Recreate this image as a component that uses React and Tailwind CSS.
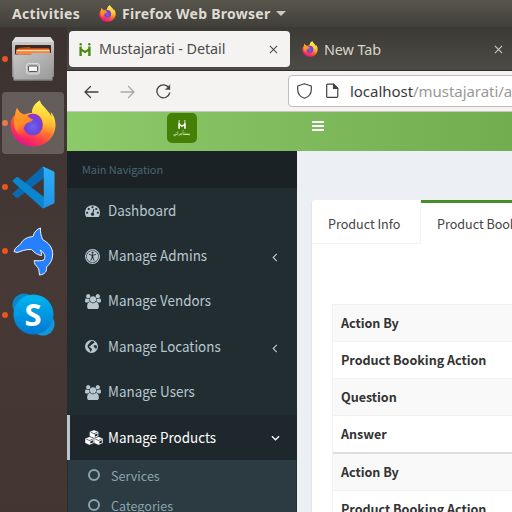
import React from "react";

const UI = "font-['Noto_Sans','Open_Sans',sans-serif]";
const PAGE = "font-['Noto_Sans_CJK_JP','Noto_Sans_CJK_SC',sans-serif]";

function Firefox({ id, className }) {
  return (
    <svg viewBox="0 0 46 47" className={className}>
      <defs>
        <linearGradient id={id + "b"} x1="0.8" y1="0.1" x2="0.3" y2="1">
          <stop offset="0.05" stopColor="#fff44f" />
          <stop offset="0.3" stopColor="#ffc02e" />
          <stop offset="0.52" stopColor="#ff722f" />
          <stop offset="0.75" stopColor="#ff3750" />
          <stop offset="1" stopColor="#e0128c" />
        </linearGradient>
        <linearGradient id={id + "y"} x1="0.5" y1="0" x2="0.5" y2="1">
          <stop offset="0" stopColor="#fff44f" />
          <stop offset="0.6" stopColor="#ffc52f" />
          <stop offset="1" stopColor="#ff6a35" stopOpacity="0.1" />
        </linearGradient>
        <linearGradient id={id + "o"} x1="0.2" y1="0" x2="0.6" y2="1">
          <stop offset="0" stopColor="#ffa52a" />
          <stop offset="0.55" stopColor="#ff8a25" />
          <stop offset="1" stopColor="#ff4048" stopOpacity="0.1" />
        </linearGradient>
        <radialGradient id={id + "p"} cx="0.5" cy="0.6" r="0.6">
          <stop offset="0" stopColor="#7160f5" />
          <stop offset="0.6" stopColor="#6b45d8" />
          <stop offset="1" stopColor="#a030c8" />
        </radialGradient>
      </defs>
      <path fill={`url(#${id}b)`} d="M7 8C5 13 5.500 14 5.500 14C1.500 18 .5 22 .6 26C1.300 38 11 46.500 23 46.500C36 46.500 45.500 37 45.500 25C45.500 18 42.500 13.500 40.500 12C41.500 15 41.500 17 41.500 17C40 13 36.500 10 34 7C31.500 4.500 30 2 29.800.4C24 4 22 9 22 13C17 13 14 15 14 15C10 13 8.500 11 7 8Z" />
      <path fill={`url(#${id}y)`} d="M29.800.4C23.500 4 22 9 22 13C29 13 33 18 33.500 23C34 32 28 35 23 36C32 39 41 34 42.500 25C43.400 20 42 17 41.500 17C40 13 36.500 10 34 7C31.500 4.500 30 2 29.800.4Z" />
      <ellipse cx="23" cy="24.500" rx="9.800" ry="10.800" fill={`url(#${id}p)`} />
      <path fill={`url(#${id}o)`} d="M7 8C8.500 12 12 14.500 16.500 14.800C18 17 20 18.500 23 19.500C22.500 22 18 22.500 16.500 23.500C14.500 25 15 27 13.300 28.500C15 34.500 19 36 24 35.500C18 40 7 37 4.500 27C3.500 22 4.500 17 5.500 14C5.500 12 6 10 7 8Z" />
    </svg>
  );
}

function Files() {
  return (
    <svg viewBox="0 0 44 46" className="h-[46px] w-[44px]">
      <defs>
        <linearGradient id="fl" x1="0" y1="0" x2="0" y2="1">
          <stop offset="0" stopColor="#d4d4d4" />
          <stop offset="1" stopColor="#858585" />
        </linearGradient>
        <linearGradient id="fd" x1="0" y1="0" x2="1" y2="1">
          <stop offset="0" stopColor="#c6c6c6" />
          <stop offset="1" stopColor="#999" />
        </linearGradient>
      </defs>
      <path d="M5 1H39L43 6V41H1V6Z" fill="url(#fl)" />
      <path d="M4.500 1H39.500L43 6H1Z" fill="#dedede" />
      <rect x="4" y="9" width="36" height="10" rx="1" fill="#3b2920" />
      <path d="M7 12L18 11L20 12H38V19H7Z" fill="#c64a18" />
      <path d="M5 13.500H39V18H5Z" fill="#f08a3c" />
      <path d="M6 14.500H38" stroke="#ffe0b5" strokeWidth="1.200" />
      <path d="M2.500 18.500H20L22 17H41.500V43.500Q41.500 44.500 40.500 44.500H3.500Q2.500 44.500 2.500 43.500Z" fill="url(#fd)" />
      <path d="M2.500 44H41.500" stroke="#707070" />
      <rect x="15.500" y="27.500" width="13" height="10.500" rx="2" fill="#bdbdbd" stroke="#dcdcdc" />
      <rect x="17.500" y="30" width="9" height="5.500" rx="1" fill="#f5f5f5" stroke="#555" />
    </svg>
  );
}

function VSCode() {
  return (
    <svg viewBox="0 0 43 43" className="h-[43px] w-[43px]">
      <defs>
        <linearGradient id="vr" x1="0" y1="0" x2="0" y2="1">
          <stop offset="0" stopColor="#2bb0f5" />
          <stop offset="1" stopColor="#2393e6" />
        </linearGradient>
      </defs>
      <path d="M.5 28.300L4.500 32Q5.200 32.300 6 31.800L32 12V.5Q31 .5 30 1.300L.6 27.500Q.2 28 .5 28.300Z" fill="#0a69b0" />
      <path d="M.5 14.700L4.500 11Q5.200 10.700 6 11.200L32 31V42.500Q31 42.500 30 41.700L.6 15.500Q.2 15 .5 14.700Z" fill="#0a86d0" />
      <path d="M31.500 42.300Q30.200 42 31.800 40V3Q30.200 1 31.500.7L41.500 5.200Q42.500 5.800 42.500 7V36Q42.500 37.200 41.500 37.800Z" fill="url(#vr)" />
    </svg>
  );
}

function Dolphin() {
  return (
    <svg viewBox="0 0 41 49" className="h-[49px] w-[41px]">
      <path
        d="M1 24.500C2 20 6 19 8 16.500C10 12 15 10 20 9.500C21 5 24 2 27.500 1C27 5 28 8 29.500 12.500C36 16 40 21 39.700 28C39.500 33 37 37 33.500 40C34 44 32 47.500 26.500 48C26 44 26 42 24.500 40C22.500 38.500 21 36.500 21.300 33.500C25 34 27.500 34 31 33C33 29 31.500 25.500 27 23C28.500 25 29 27 28.500 28.500C24.500 28 22 26 18.500 22.500C12 22 8 24.500 4 25.500Z"
        fill="#2580ff" stroke="#eef4fb" strokeWidth="1" strokeLinejoin="round"
      />
    </svg>
  );
}

function Skype() {
  return (
    <div className="relative mb-[2px] flex h-[43px] w-[43px] items-center justify-center">
      <svg viewBox="0 0 43 43" className="absolute inset-0 h-[43px] w-[43px]">
        <defs>
          <linearGradient id="sk" x1="0" y1="0" x2="0" y2="1">
            <stop offset="0" stopColor="#00b7f0" />
            <stop offset="1" stopColor="#0078d4" />
          </linearGradient>
        </defs>
        <circle cx="12" cy="12" r="11.500" fill="#0b86c6" />
        <circle cx="31" cy="31" r="11.500" fill="#1597d8" />
        <circle cx="21.500" cy="21.500" r="20" fill="url(#sk)" />
      </svg>
      <span className="relative font-['Open_Sans',sans-serif] text-[31px] font-bold leading-none text-white">S</span>
    </div>
  );
}

function HMark({ className }) {
  return (
    <svg viewBox="0 0 12 13" className={className} fill="currentColor">
      <circle cx="1.700" cy="1.200" r="1.200" />
      <circle cx="10.300" cy="1.200" r="1.200" />
      <path d="M.4 3.600H2.800V5.800L6 7.800L9.200 5.800V3.600H11.600V13H9.200V8.300L6 10.200L2.800 8.300V13H.4Z" />
    </svg>
  );
}

const Dash = () => (
  <svg viewBox="0 0 1792 1792" className="h-[15px] w-[15px]" fill="currentColor">
    <path d="M384 1152q0-53-37.500-90.500t-90.500-37.500-90.500 37.500-37.500 90.500 37.500 90.500 90.500 37.500 90.500-37.500 37.500-90.500zm192-448q0-53-37.500-90.500t-90.500-37.500-90.500 37.500-37.500 90.500 37.500 90.500 90.500 37.500 90.500-37.500 37.500-90.500zm428 481l101-382q6-26-7.500-48.500t-38.500-29.500-48 6.500-30 39.500l-101 382q-60 5-107 43.500t-63 98.500q-20 77 20 146t117 89 146-20 89-117q16-60-6-117t-72-91zm660-33q0-53-37.500-90.500t-90.500-37.500-90.500 37.500-37.500 90.500 37.500 90.500 90.500 37.500 90.500-37.500 37.500-90.500zm-640-640q0-53-37.500-90.500t-90.500-37.500-90.500 37.500-37.500 90.500 37.500 90.500 90.500 37.500 90.500-37.500 37.500-90.500zm448 192q0-53-37.500-90.500t-90.500-37.500-90.500 37.500-37.500 90.500 37.500 90.500 90.500 37.500 90.500-37.500 37.500-90.500zm320 448q0 261-141 483-19 29-54 29h-1402q-35 0-54-29-141-221-141-483 0-182 71-348t191-286 286-191 348-71 348 71 286 191 191 286 71 348z" />
  </svg>
);

const Users = () => (
  <svg viewBox="0 0 1920 1792" className="h-[15px] w-[16px]" fill="currentColor">
    <path d="M593 896q-162 5-265 128h-134q-82 0-138-40.500t-56-118.500q0-353 124-353 6 0 43.500 21t97.500 42.500 119 21.500q67 0 133-23-5 37-5 66 0 139 81 256zm1071 637q0 120-73 189.500t-194 69.500h-874q-121 0-194-69.500t-73-189.500q0-53 3.500-103.500t14-109 26.500-108.500 43-97.500 62-81 85.500-53.500 111.500-20q10 0 43 21.500t73 48 107 48 135 21.500 135-21.500 107-48 73-48 43-21.500q61 0 111.500 20t85.500 53.500 62 81 43 97.500 26.500 108.500 14 109 3.500 103.500zm-1024-1277q0 106-75 181t-181 75-181-75-75-181 75-181 181-75 181 75 75 181zm704 384q0 159-112.500 271.500t-271.500 112.500-271.500-112.500-112.500-271.500 112.500-271.500 271.500-112.500 271.500 112.500 112.500 271.500zm576 225q0 78-56 118.500t-138 40.500h-134q-103-123-265-128 81-117 81-256 0-29-5-66 66 23 133 23 59 0 119-21.500t97.500-42.500 43.500-21q124 0 124 353zm-128-609q0 106-75 181t-181 75-181-75-75-181 75-181 181-75 181 75 75 181z" />
  </svg>
);

const Access = () => (
  <svg viewBox="0 0 15 15" className="h-[15px] w-[15px]">
    <circle cx="7.500" cy="7.500" r="6.900" fill="none" stroke="currentColor" strokeWidth="1.200" />
    <circle cx="7.500" cy="7.500" r="5.700" fill="currentColor" />
    <g stroke="#222d32" fill="none" strokeLinecap="round">
      <circle cx="7.500" cy="3.700" r=".8" fill="#222d32" strokeWidth=".4" />
      <path d="M4.300 5.500L6.500 6.100H8.500L10.700 5.500" strokeWidth=".9" />
      <path d="M7.500 6V8.500" strokeWidth="1.600" />
      <path d="M7.100 8.500L6 11.400M7.900 8.500L9 11.400" strokeWidth=".9" />
    </g>
  </svg>
);

const Globe = () => (
  <svg viewBox="0 0 13 13" className="h-[13px] w-[13px]">
    <circle cx="6.500" cy="6.500" r="6.500" fill="currentColor" />
    <path d="M6.200.9L8.300 1.300L9.800 2.200L8.400 3.300L7.300 4.300L5.800 5.200L5.200 6.200L4 6.300L4.800 7.500L6.300 8.300L7 9.500L6.200 11L5.300 12L4.800 9.800L3.600 8.200L2.500 6.800L2.900 4.900L4.300 3.300ZM9.600 5.100L11.700 5.500L12 7.200L10.900 9.200L10.200 7.800L9 7.200L8.700 5.900Z" fill="#222d32" />
  </svg>
);

const Cubes = () => (
  <svg viewBox="0 0 18 15" className="h-[15px] w-[18px]">
    {[[9, 0], [4.5, 6.8], [13.5, 6.8]].map(([x, y]) => (
      <g key={x} transform={`translate(${x} ${y})`}>
        <path d="M0 0L4.400 1.700V6.200L0 8.200L-4.400 6.200V1.700Z" fill="currentColor" stroke="#1e282c" strokeWidth=".25" />
        <path d="M-3.200 2.300L0 3.700L3.200 2.300" fill="none" stroke="#1e282c" strokeWidth=".7" />
        <path d="M.8 4.600L3.500 3.400V5.600L.8 6.800Z" fill="#1e282c" />
      </g>
    ))}
  </svg>
);

const nav = [
  { label: "Dashboard", Icon: Dash },
  { label: "Manage Admins", Icon: Access, arrow: true },
  { label: "Manage Vendors", Icon: Users },
  { label: "Manage Locations", Icon: Globe, arrow: true },
  { label: "Manage Users", Icon: Users },
  { label: "Manage Products", Icon: Cubes, open: true },
];

function NavItem({ label, Icon, arrow, open }) {
  return (
    <div className={"flex h-[45.4px] items-center border-l-[3px] pl-[15px] pr-[17px] " + (open ? "border-[#b8c7ce] bg-[#1e282c] text-white" : "border-transparent text-[#b8c7ce]")}>
      <span className="flex w-[23px] shrink-0"><Icon /></span>
      <span className="-mt-[2px] flex-1 origin-left scale-x-[0.92] whitespace-nowrap text-[14.6px] leading-5">{label}</span>
      {arrow && <svg viewBox="0 0 6 10" className="mr-[2px] mt-[3px] h-[9px] w-[6px]" fill="none" stroke="currentColor" strokeWidth="1.300"><path d="M5 1L1 5L5 9" /></svg>}
      {open && <svg viewBox="0 0 10 6" className="h-[6px] w-[9px]" fill="none" stroke="currentColor" strokeWidth="1.400"><path d="M1 1L5 5L9 1" /></svg>}
    </div>
  );
}

function SubItem({ label }) {
  return (
    <div className="flex h-[30px] items-center pl-[20px] text-[#8aa4af]">
      <span className="mr-[11px] h-[12px] w-[12px] rounded-full border-2 border-[#8aa4af]" />
      <span className="mt-px text-[12.6px] leading-5">{label}</span>
    </div>
  );
}

const Close = ({ className }) => (
  <svg viewBox="0 0 10 10" className={"h-[9px] w-[9px] " + className} stroke="currentColor" strokeWidth="1.200"><path d="M1 1L9 9M9 1L1 9" /></svg>
);

function DockItem({ children, active }) {
  return (
    <div className="flex h-16 items-center">
      <span className="ml-[2px] h-[6px] w-[6px] shrink-0 rounded-full bg-[#e95420]" />
      <div className={"-ml-[6px] flex h-[62px] w-[62px] items-center justify-center rounded " + (active ? "bg-white/20" : "")}>{children}</div>
    </div>
  );
}

const rows = ["Action By", "Product Booking Action", "Question", "Answer", "Action By", "Product Booking Action"];

export default function App() {
  return (
    <div className="flex h-[512px] w-[512px] flex-col overflow-hidden bg-[#ecf0f5]">
      <header className={"flex h-[27px] shrink-0 items-center bg-linear-to-b from-[#59564d] to-[#403f3a] pl-3 text-[14px] font-bold text-[#dfdbd2] " + UI}>
        <span className="w-[87px] whitespace-nowrap tracking-[0.3px]">Activities</span>
        <Firefox id="fa" className="h-[17px] w-[17px] shrink-0" />
        <span className="ml-[6px] w-[150px] whitespace-nowrap tracking-[0.27px]">Firefox Web Browser</span>
        <svg viewBox="0 0 10 5" className="ml-[4px] h-[5px] w-[10px]" fill="#ccc8c0"><path d="M0 0H10L5 5Z" /></svg>
      </header>

      <div className="flex min-h-0 flex-1">
        <aside className="flex w-[67px] shrink-0 flex-col bg-linear-to-b from-[#3b3331] via-[#463936] to-[#423532]">
          <DockItem><Files /></DockItem>
          <DockItem active><Firefox id="fb" className="h-[47px] w-[46px]" /></DockItem>
          <DockItem><VSCode /></DockItem>
          <DockItem><Dolphin /></DockItem>
          <DockItem><Skype /></DockItem>
        </aside>

        <main className="flex min-w-0 flex-1 flex-col overflow-hidden">
          <div className={"flex h-[44px] shrink-0 items-start border-b border-[#332b2d] bg-linear-to-b from-[#3b3a35] to-[#4d4b45] pl-[2px] pt-1 text-[14.4px] " + UI}>
            <div className="flex h-9 w-[221px] shrink-0 items-center rounded bg-[#f4f3f2] pl-[10px] pr-3 text-[#4c4c4c]">
              <HMark className="h-[13px] w-3 text-[#4a8a0a]" />
              <span className="ml-2 flex-1 whitespace-nowrap tracking-[-0.08px]">Mustajarati - Detail</span>
              <Close className="text-[#4c4c4c]" />
            </div>
            <div className="flex h-9 w-[222px] shrink-0 items-center pl-3 text-[#d8d4c8]">
              <Firefox id="fc" className="h-4 w-4" />
              <span className="ml-[6px] mt-px w-[170px] tracking-[-0.08px]">New Tab</span>
              <Close className="text-[#d0cdc6]" />
            </div>
          </div>

          <div className="flex h-[41px] shrink-0 items-center border-b border-[#c9c6c3] bg-[#f4f3f2] pl-[17px]">
            <svg viewBox="0 0 90 16" className="mt-px h-4 w-[90px] shrink-0" fill="none" strokeWidth="1.300" strokeLinecap="round" strokeLinejoin="round">
              <path d="M14 8H1M6.500 2.500L1 8L6.500 13.500" stroke="#424242" />
              <path d="M37 8H50M44.500 2.500L50 8L44.500 13.500" stroke="#aaa8a6" />
              <path d="M84.700 3.500A6.500 6.500 0 1 0 85.700 9" stroke="#424242" />
              <path d="M86 1V5.500H81.500Z" fill="#424242" stroke="#424242" strokeWidth=".4" />
            </svg>
            <div className="ml-[114px] flex h-8 w-[240px] shrink-0 items-center rounded border border-[#bfbcb9] bg-white pl-2">
              <svg viewBox="0 0 42 16" className="h-4 w-[42px] shrink-0" fill="none" stroke="#424242" strokeWidth="1.200" strokeLinejoin="round">
                <path d="M7.500.8L14.300 3V6.500C14.300 11 11.500 14 7.500 15.300C3.500 14 .7 11 .7 6.500V3Z" />
                <path d="M29.700 2.200Q29.700 1.200 30.700 1.200H36.500L40.800 5.500V13.300Q40.800 14.300 39.800 14.300H30.700Q29.700 14.300 29.700 13.300Z" />
                <path d="M36.500 1.200V5.500H40.800Z" fill="#424242" />
              </svg>
              <span className={"ml-[11px] whitespace-nowrap text-[15px] tracking-[-0.04px] text-[#3a3a3a] " + UI}>localhost<span className="text-[#9a9896]">/mustajarati/a</span></span>
            </div>
          </div>

          <div className="flex h-[39px] shrink-0 bg-linear-to-r from-[#8dca6a] to-[#72ad4f]">
            <div className="flex w-[230px] justify-center pt-[1px]">
              <div className="flex h-[30px] w-[30px] flex-col items-center rounded-[5px] bg-[#448005] pt-[7px] text-white">
                <HMark className="h-[9px] w-2" />
                <span className="mt-[1px] origin-top scale-x-[0.66] scale-y-[0.9] whitespace-nowrap font-['DejaVu_Sans',sans-serif] text-[5.500px] leading-[7px]">مستأجراتي</span>
              </div>
            </div>
            <svg viewBox="0 0 12 10" className="ml-[15px] mt-[9px] h-[10px] w-3" fill="white"><path d="M0 0H12V2H0ZM0 4H12V6H0ZM0 8H12V10H0Z" /></svg>
          </div>

          <div className={"flex min-h-0 flex-1 " + PAGE}>
            <nav className="w-[230px] shrink-0 bg-[#222d32]">
              <div className="flex h-[37px] items-center bg-[#1a2226] pl-[15px] text-[11px] tracking-[-0.12px] text-[#4b646f]">Main Navigation</div>
              {nav.map((n) => <NavItem key={n.label} {...n} />)}
              <div className="mx-px bg-[#2c3b41]">
                <SubItem label="Services" />
                <SubItem label="Categories" />
              </div>
            </nav>
            <section className="min-w-0 flex-1 overflow-hidden pl-[15px] pt-[49px]">
              <div className="h-[320px] w-[300px] rounded-[3px] bg-white text-[12.600px] text-[#444] shadow-[0_1px_1px_rgba(0,0,0,0.1),-1px_0_1px_rgba(0,0,0,0.04)]">
                <div className="flex h-11">
                  <div className="flex w-[109px] items-center border-b border-r border-[#f2f2f2] pl-4 pt-[5px] tracking-[-0.03px]">Product Info</div>
                  <div className="flex w-[191px] items-center whitespace-nowrap border-t-[3px] border-[#468c28] pl-4 pt-[2px] tracking-[-0.03px]">Product Booking</div>
                </div>
                <div className="ml-5 mt-[60px] border-l border-[#f2f2f2] font-bold tracking-[-0.04px] text-[#333]">
                  {rows.map((r, i) => (
                    <div key={i} className={"flex items-center whitespace-nowrap pl-2 " + (i === 4 ? "h-[38px] border-t-2 border-[#ddd] " : "h-[37px] border-t border-[#f2f2f2] ") + (i % 2 === 0 ? "bg-[#f9f9f9]" : "bg-white")}>{r}</div>
                  ))}
                </div>
              </div>
            </section>
          </div>
        </main>
      </div>
    </div>
  );
}
